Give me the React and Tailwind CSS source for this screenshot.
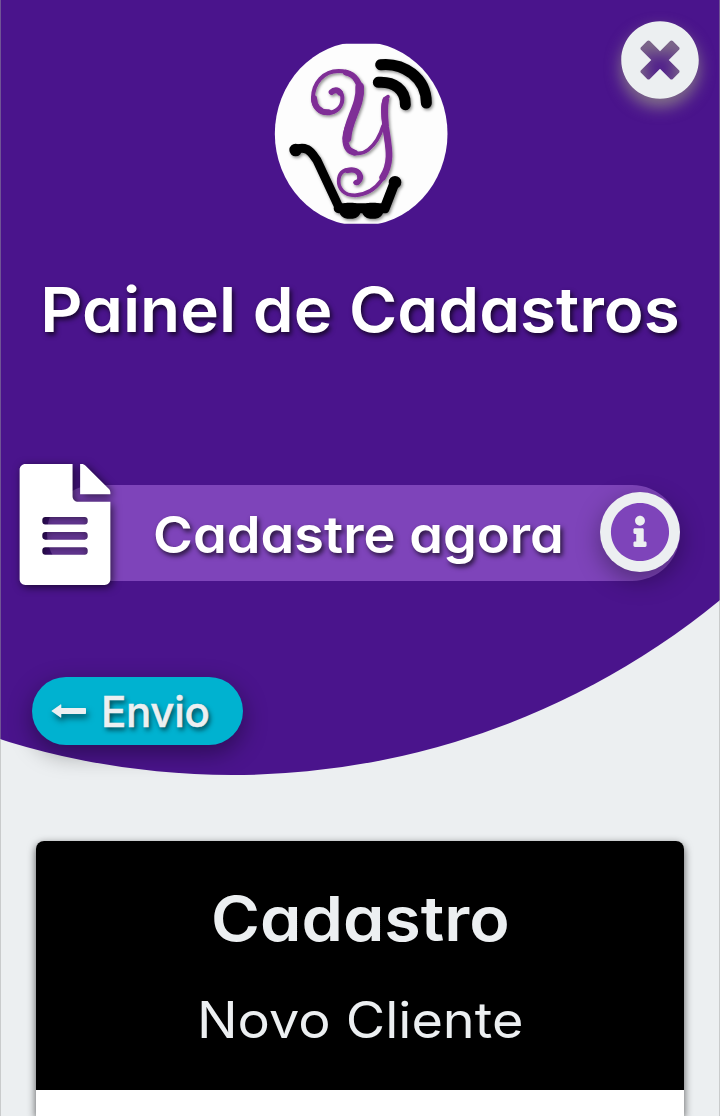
import { FaFileAlt, FaInfoCircle, FaTimesCircle } from "react-icons/fa";

function Logo() {
  return (
    <svg viewBox="0 0 600 600" className="h-[200px] w-[200px]" fill="none" strokeLinecap="round" strokeLinejoin="round">
      <defs>
        <clipPath id="disc"><rect x="40" y="41" width="525" height="540" /></clipPath>
        <filter id="soft" x="-10%" y="-10%" width="125%" height="125%">
          <feDropShadow dx="4" dy="5" stdDeviation="4" floodColor="#000" floodOpacity="0.45" />
        </filter>
      </defs>
      <ellipse cx="303.500" cy="311" rx="259" ry="276" fill="#fdfdfd" clipPath="url(#disc)" />
      <g filter="url(#soft)" stroke="#7f2d96">
        <path strokeWidth="12" d="M214 188C222 175 244 178 247 201C249 230 230 248 203 249C174 249 159 228 159 203C160 160 190 123 236 123C268 123 296 140 301 180" />
        <path strokeWidth="18" d="M215 186C222 179 233 178 240 188M162 205C164 232 181 248 205 247M258 128C286 134 301 160 301 190C301 235 258 275 256 325C256 350 266 365 284 368" />
        <path strokeWidth="26" d="M299 170C304 225 263 270 261 325" />
        <path strokeWidth="11" d="M262 345C270 373 303 377 325 359C347 341 361 316 369 288" />
        <path strokeWidth="11" d="M384 200C368 209 367 230 370 265L385 370C391 425 355 491 285 496C251 496 236 475 236 454C236 428 252 418 274 418C301 418 312 441 297 456C293 461 288 461 285 458" />
        <path strokeWidth="20" d="M377 210C371 235 374 260 377 290C382 325 388 352 387 380C386 402 379 425 368 442" />
        <path strokeWidth="15" d="M262 422C285 415 302 428 299 446C297 453 293 457 289 457" />
      </g>
      <g filter="url(#soft)" stroke="#030303">
        <path strokeWidth="33" d="M362 104C430 97 499 143 499 219M355 157C401 154 437 178 436 224" />
        <path strokeWidth="27" d="M106 360C118 354 131 354 141 358C155 365 163 381 171 391L237 532" />
        <path strokeWidth="30" d="M236 535H374L404 458" />
        <circle cx="107" cy="360" r="5" strokeWidth="28" />
        <circle cx="405" cy="457" r="5" strokeWidth="28" />
        <path strokeWidth="48" d="M262 542H278M330 542H346" />
      </g>
    </svg>
  );
}

function ArrowLeft() {
  return (
    <svg viewBox="0 0 35 14" className="h-[14px] w-[35px] shrink-0 overflow-visible drop-shadow-[2px_4px_3px_rgba(0,0,0,0.5)]" fill="currentColor">
      <path d="M0.300 7L9.500 0.400Q10.300 0 10.300 1V4H34.300Q35 4 35 4.700V9.300Q35 10 34.300 10H10.300V13Q10.300 14 9.500 13.600Z" />
    </svg>
  );
}

export default function App() {
  return (
    <main className="relative flex h-[1116px] w-full flex-col overflow-hidden bg-[#eceff1] font-['Inter',sans-serif] text-white [font-feature-settings:'cv11']">
      <div className="absolute top-[-761px] left-[-536px] h-[1536px] w-[1536px] rounded-full bg-[#4a148c]" />
      <div className="absolute inset-0 border-x border-[#a0a0a0]/45" />
      <button aria-label="Fechar" className="absolute top-[20px] right-[20px] text-[80px] text-[#eceff1] drop-shadow-[0_8px_8px_rgba(150,145,135,0.8)]">
        <FaTimesCircle />
      </button>

      <header className="relative flex flex-col">
        <div className="flex h-[234px] items-start justify-center pt-[30px]">
          <Logo />
        </div>
        <h1 className="mt-[28px] flex h-[96px] scale-x-[1.058] items-center justify-center text-[62px] leading-[96px] font-semibold whitespace-nowrap [text-shadow:2px_3px_5px_#000000b0]">
          Painel de Cadastros
        </h1>
        <div className="mt-[106px] flex h-[121px] items-center">
          <FaFileAlt className="relative z-10 ml-[19px] h-[121px] w-[92px] shrink-0 drop-shadow-[2px_2px_4px_rgba(0,0,0,0.65)]" />
          <div className="-ml-[64px] mt-[17px] flex h-[96px] w-[633px] items-center rounded-full bg-[#7e44ba] pl-[106px]">
            <span className="mt-[3px] w-[447px] shrink-0 origin-left scale-x-[1.062] text-[51px] leading-[96px] font-semibold whitespace-nowrap [text-shadow:2px_3px_5px_#000000b0]">
              Cadastre agora
            </span>
            <button aria-label="Informações" className="-mt-[2px] flex h-[80px] w-[80px] shrink-0 items-center justify-center rounded-full bg-[#eceff1] text-[60px] text-[#7e44ba] shadow-[0_8px_24px_rgba(0,0,0,0.35)]">
              <FaInfoCircle />
            </button>
          </div>
        </div>
        <button className="mt-[92px] ml-[32px] flex h-[68px] w-[211px] items-center rounded-full bg-[#00b2d0] pl-[19px] text-[42px] font-medium text-[#eceff1] shadow-[0_8px_24px_rgba(0,0,0,0.4)]">
          <ArrowLeft />
          <span className="ml-[15px] tracking-[-0.3px] [-webkit-text-stroke:0.5px_currentColor] [text-shadow:2px_3px_5px_#000000a0]">Envio</span>
        </button>
      </header>

      <section className="relative mx-[36px] mt-[96px] flex flex-1 flex-col rounded-t-[8px] bg-white shadow-[0_3px_8px_rgba(0,0,0,0.65)]">
        <div className="flex h-[249px] flex-col items-center rounded-t-[8px] bg-black pt-[30px] text-[#eceff1]">
          <h2 className="h-[96px] scale-x-[1.072] text-[62px] leading-[96px] font-semibold">Cadastro</h2>
          <p className="mt-[13px] scale-x-[1.08] text-[50px] leading-[80px]">Novo Cliente</p>
        </div>
      </section>
    </main>
  );
}
